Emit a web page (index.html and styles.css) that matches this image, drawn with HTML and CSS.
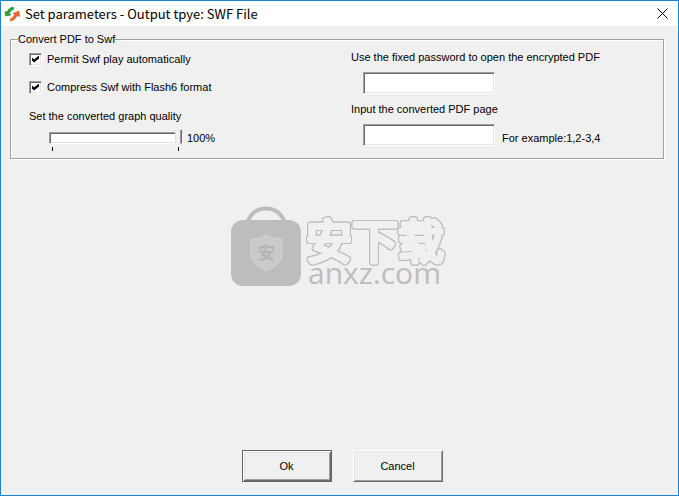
FILE: index.html
```html
<!DOCTYPE html>
<html lang="en">
<head>
<meta charset="utf-8">
<title>Set parameters</title>
<link rel="stylesheet" href="styles.css">
</head>
<body>
<div class="window">
  <header class="titlebar">
    <svg class="app-icon" viewBox="0 0 16 16" aria-hidden="true">
      <path class="arrow-green" d="M9 1C6 1.500 4 3.500 3 6L1 5.500L1.500 10L7 9L5.500 7.500C6 5.500 8 4 10 3Z"/>
      <path class="arrow-orange" d="M6.500 15C9.500 14.500 12 12.500 13 9.500L15.500 10.500L15 5L9 7.500L10.500 8.500C10 10.500 8 12 6 13Z"/>
    </svg>
    <h1 class="title">Set parameters - Output tpye: SWF File</h1>
    <button class="close" type="button" aria-label="Close">
      <svg class="close-icon" viewBox="0 0 11 11" aria-hidden="true"><path d="M.5.5l10 10M10.500.5l-10 10"/></svg>
    </button>
  </header>
  <form class="content">
    <fieldset class="group">
      <legend>Convert PDF to Swf</legend>
      <div class="columns">
        <div class="options">
          <label class="check"><input type="checkbox" checked>Permit Swf play automatically</label>
          <label class="check"><input type="checkbox" checked>Compress Swf with Flash6 format</label>
          <label class="caption" for="quality">Set the converted graph quality</label>
          <div class="quality">
            <div class="slider">
              <input id="quality" type="range" min="0" max="100" value="100">
              <div class="ticks"><span></span><span></span></div>
            </div>
            <output for="quality">100%</output>
          </div>
        </div>
        <div class="fields">
          <label class="caption" for="password">Use the fixed password to open the encrypted PDF</label>
          <div class="field"><input id="password" class="text" type="text"></div>
          <label class="caption" for="pages">Input the converted PDF page</label>
          <div class="field"><input id="pages" class="text" type="text"><span>For example:1,2-3,4</span></div>
        </div>
      </div>
    </fieldset>
    <div class="watermark">
      <svg class="mark" viewBox="0 0 214 82">
        <path class="handle" d="M17 17C21 6 28 2.500 36 2.500S51 6 55 17"/>
        <rect class="bag" x="1" y="14" width="70" height="66" rx="12"/>
        <path class="shield" d="M36.500 29C41 32 46 33 52 33V49C52 56 45 61 36.500 65C28 61 21 56 21 49V33C27 33 32 32 36.500 29Z"/>
        <text class="seal" x="36.500" y="53">安</text>
        <text class="brand" x="76" y="52">安下载</text>
        <text class="domain" x="78" y="78">anxz.com</text>
      </svg>
    </div>
    <footer class="actions">
      <button class="push default" type="submit">Ok</button>
      <button class="push" type="button">Cancel</button>
    </footer>
  </form>
</div>
</body>
</html>
```
FILE: styles.css
```css
* { box-sizing: border-box; }
body {
  margin: 0;
  background: #f0f0f0;
  color: #000;
  font: 11px/14px "Liberation Sans", Arial, sans-serif;
}
.window {
  display: flex;
  flex-direction: column;
  min-height: 100vh;
  border: 1px solid #1883d7;
}
.titlebar {
  display: flex;
  align-items: center;
  height: 25px;
  padding: 0 10px 0 3px;
  background: #fff;
}
.app-icon { width: 16px; height: 16px; }
.arrow-green { fill: #23a638; stroke: #16752a; stroke-width: .5; }
.arrow-orange { fill: #f06522; stroke: #c94d18; stroke-width: .5; }
.title {
  flex: 1;
  margin: 0 0 0 5px;
  font: 13px/22px "Noto Sans CJK SC", sans-serif;
}
.close {
  display: flex;
  padding: 0;
  border: 0;
  background: none;
}
.close-icon { width: 11px; height: 11px; fill: none; stroke: #000; }
.content {
  flex: 1;
  display: flex;
  flex-direction: column;
  padding: 6px 14px 13px 9px;
}
.group {
  min-width: 0;
  margin: 0;
  padding: 6px 0 7px 18px;
  border: 1px solid #a0a0a0;
  box-shadow: 1px 1px 0 #fff, inset 1px 1px 0 #fff;
}
.group legend {
  margin-left: -11px;
  padding: 0;
  background: #f0f0f0;
}
.columns {
  display: grid;
  grid-template-columns: 1fr 1fr;
  column-gap: 10px;
}
.options { display: flex; flex-direction: column; gap: 14px; }
.options .caption { margin-top: 1px; }
.check { display: flex; align-items: center; gap: 5px; }
.check input {
  appearance: none;
  width: 13px;
  height: 13px;
  margin: 0;
  border: 1px solid;
  border-color: #a0a0a0 #fff #fff #a0a0a0;
  background: #fff;
  box-shadow: inset 1px 1px 0 #696969, inset -1px -1px 0 #e3e3e3;
}
.check input:checked::before {
  content: "";
  display: block;
  width: 7px;
  height: 7px;
  margin: 2px;
  background: #000;
  clip-path: polygon(0 29%, 29% 57%, 100% 0, 100% 43%, 29% 100%, 0 71%);
}
.quality { display: flex; gap: 4px; margin: -8px 0 0 20px; }
.quality output { padding-top: 2px; }
.slider { width: 134px; }
.slider input {
  appearance: none;
  display: block;
  width: 100%;
  height: 17px;
  margin: 0;
  background: none;
}
.slider input::-webkit-slider-runnable-track {
  height: 12px;
  border: 1px solid;
  border-color: #a0a0a0 #fff #fff #a0a0a0;
  background: #fff;
  box-shadow: inset 1px 1px 0 #696969, inset -1px -1px 0 #e3e3e3;
}
.slider input::-webkit-slider-thumb {
  appearance: none;
  width: 7px;
  height: 17px;
  margin-top: -3px;
  background: linear-gradient(90deg, #e3e3e3 1px, #f0f0f0 1px 5px, #a0a0a0 5px 6px, #696969 6px);
  clip-path: polygon(0 0, 100% 0, 100% 78%, 50% 100%, 0 78%);
}
.ticks {
  display: flex;
  justify-content: space-between;
  margin: 1px 4px 0 3px;
}
.ticks span { width: 1px; height: 4px; background: #000; }
.fields { display: flex; flex-direction: column; margin-top: -2px; }
.field {
  display: flex;
  align-items: center;
  gap: 7px;
  margin: 8px 0 8px 12px;
}
.text {
  width: 132px;
  height: 22px;
  padding: 2px;
  border: 1px solid;
  border-color: #a0a0a0 #fff #fff #a0a0a0;
  background: #fff;
  box-shadow: inset 1px 1px 0 #696969, inset -1px -1px 0 #e3e3e3;
  font: inherit;
}
.field span { padding-top: 6px; }
.field:last-child { margin-bottom: 0; }
.watermark {
  flex: 1;
  display: flex;
  justify-content: center;
  padding-top: 47px;
}
.mark { width: 214px; height: 82px; overflow: visible; }
.handle { fill: none; stroke: #bdbdbd; stroke-width: 4; }
.bag { fill: #bdbdbd; }
.shield { fill: #cacac8; stroke: #d2d2d2; stroke-width: 1; }
.seal {
  fill: #b5b5b5;
  font: bold 17px "Noto Sans CJK SC", sans-serif;
  text-anchor: middle;
}
.brand {
  fill: #f0f0f0;
  stroke: #f0f0f0;
  stroke-width: 4;
  stroke-linejoin: round;
  font: 46px "Noto Sans CJK SC", sans-serif;
  filter: drop-shadow(1px 0 0 #bdbdbd) drop-shadow(-1px 0 0 #bdbdbd) drop-shadow(0 1px 0 #bdbdbd) drop-shadow(0 -1px 0 #bdbdbd);
}
.domain {
  fill: #bdbdbd;
  font: 500 30px "Open Sans", sans-serif;
}
.actions {
  display: flex;
  justify-content: center;
  gap: 21px;
  padding-left: 10px;
}
.push {
  width: 90px;
  height: 32px;
  padding: 0;
  border: 1px solid;
  border-color: #fff #696969 #696969 #fff;
  background: #f0f0f0;
  box-shadow: inset 1px 1px 0 #e3e3e3, inset -1px -1px 0 #a0a0a0;
  color: #000;
  font: inherit;
}
.default {
  border-color: #646464;
  box-shadow: inset 1px 1px 0 #fff, inset -1px -1px 0 #696969, inset 2px 2px 0 #e3e3e3, inset -2px -2px 0 #a0a0a0;
}
```
